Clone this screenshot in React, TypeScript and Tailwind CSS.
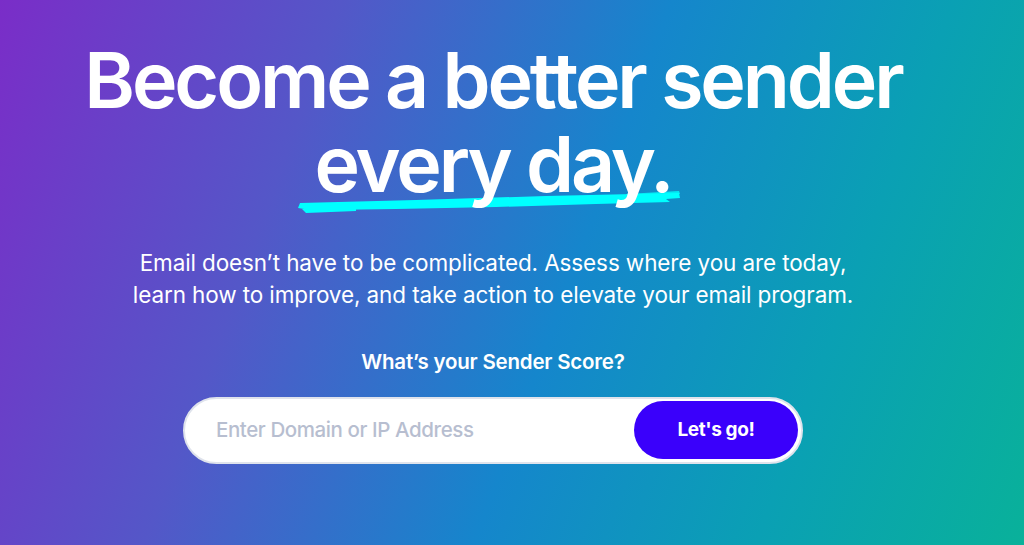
import React from "react";

function Brush() {
  return (
    <svg
      width="386"
      height="24"
      viewBox="0 0 386 24"
      className="absolute left-[-19px] top-[68px]"
      fill="#00ffff"
    >
      <path d="M4 13 L120 10 L250 6 L383 3 L384 8 L370 9 L374 12 L300 14 L200 17 L100 19 L30 20 L14 22 L8 19 L2 18 Z" />
      <path d="M330 4 L383 1 L384 4 L330 6 Z" opacity="0.8" />
      <path d="M6 19 L60 18 L60 21 L10 23 Z" />
    </svg>
  );
}

export default function App() {
  return (
    <div
      className="w-full h-[545px] overflow-hidden bg-[linear-gradient(110deg,#7a2dc8_0%,#5457c8_28%,#1586cc_55%,#0aa0b4_78%,#09b19a_100%)] text-white"
      style={{ fontFamily: "Inter, 'Noto Sans', sans-serif" }}
    >
      <div className="flex flex-col items-center pr-[38px] pt-[38px]">
        <h1 className="text-[77px] font-semibold leading-[84px] tracking-[-0.04em] text-center">
          Become a better sender
          <br />
          <span className="relative inline-block">
            <Brush />
            <span className="relative">every day.</span>
          </span>
        </h1>
        <p className="mt-[41px] text-center text-[22.5px] leading-[32px] tracking-[-0.005em]">
          Email doesn’t have to be complicated. Assess where you are today,
          <br />
          learn how to improve, and take action to elevate your email program.
        </p>
        <p className="mt-[36px] text-[20.5px] font-semibold tracking-[-0.01em]">
          What’s your Sender Score?
        </p>
        <div className="mt-[19px] flex h-[67px] w-[620px] items-center rounded-full border-2 border-[#dfe3ec] bg-white pl-[31px] pr-[3px]">
          <input
            className="flex-1 bg-transparent text-[20.5px] tracking-[-0.02em] text-gray-700 placeholder:text-[#b7bed0] outline-none font-medium"
            placeholder="Enter Domain or IP Address"
          />
          <button className="h-[58px] w-[164px] rounded-full bg-[#3a00fb] text-[19px] font-bold tracking-[-0.02em] text-white">
            Let's go!
          </button>
        </div>
      </div>
    </div>
  );
}
